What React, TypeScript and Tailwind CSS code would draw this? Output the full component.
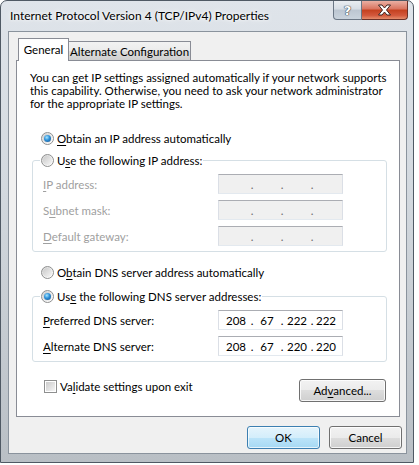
import React from "react";

function Radio({ checked }: { checked?: boolean }) {
  return (
    <span className="relative inline-flex h-[13px] w-[13px] shrink-0 items-center justify-center rounded-full border border-[#8e8f8f] bg-[linear-gradient(135deg,#d4d4d4_0%,#f4f4f4_60%,#ffffff_100%)]">
      <span className="h-[9px] w-[9px] rounded-full bg-[linear-gradient(135deg,#c9c9c9,#f6f6f6)] flex items-center justify-center">
        {checked && (
          <span className="h-[7px] w-[7px] rounded-full bg-[radial-gradient(circle_at_40%_35%,#a6e6ff_0%,#2c8fd8_45%,#1a4f85_100%)]" />
        )}
      </span>
    </span>
  );
}

function U({ children }: { children: React.ReactNode }) {
  return <span className="underline decoration-1 underline-offset-[2px]">{children}</span>;
}

function IpBox({ values, disabled }: { values: string[]; disabled?: boolean }) {
  return (
    <div
      className={`flex h-[20px] w-[125px] items-center border border-t-[#abadb3] border-x-[#dbdfe6] border-b-[#e3e9ef] pl-[3px] ${
        disabled ? "bg-[#f0f0f0] text-[#6d6d6d]" : "bg-white text-black"
      }`}
    >
      <span className="w-[28px] text-center">{values[0]}</span>
      <span className="w-[4px] text-center">.</span>
      <span className="w-[26px] text-center">{values[1]}</span>
      <span className="w-[4px] text-center">.</span>
      <span className="w-[26px] text-center">{values[2]}</span>
      <span className="w-[4px] text-center">.</span>
      <span className="w-[24px] text-center">{values[3]}</span>
    </div>
  );
}

function Row({ label, disabled, values }: { label: React.ReactNode; disabled?: boolean; values: string[] }) {
  return (
    <div className="flex items-center">
      <span className={`w-[175px] ${disabled ? "text-[#a0a0a0]" : "text-black"}`}>{label}</span>
      <IpBox values={values} disabled={disabled} />
    </div>
  );
}

function Button({ children, primary, className = "" }: { children: React.ReactNode; primary?: boolean; className?: string }) {
  return (
    <div
      className={`flex h-[23px] items-center justify-center rounded-[3px] border ${
        primary
          ? "border-[#3c7fb1] bg-[linear-gradient(to_bottom,#e5f4fc_0%,#d4eefb_50%,#bce4f9_50%,#a6d9f4_100%)] shadow-[inset_0_0_0_1px_rgba(255,255,255,0.7)]"
          : "border-[#707070] bg-[linear-gradient(to_bottom,#f2f2f2_0%,#ebebeb_50%,#dddddd_50%,#cfcfcf_100%)] shadow-[inset_0_0_0_1px_rgba(255,255,255,0.8)]"
      } ${className}`}
    >
      {children}
    </div>
  );
}

export default function App() {
  const empty = ["", "", "", ""];
  return (
    <div className="h-[465px] w-[419px] bg-white font-['Lato',sans-serif] text-[11.5px] leading-[13px] text-black">
      <div className="flex h-[463px] w-[414px] flex-col rounded-t-[7px] border border-[#4f5964] bg-[linear-gradient(to_bottom,#dfe4ea_0%,#d3d9df_40%,#b9bfc5_100%)] pb-[8px] pl-[7px] pr-[6px]">
        {/* Title bar */}
        <div className="flex h-[30px] items-start">
          <span className="whitespace-nowrap pl-[2px] pt-[8px] text-[12px] text-black [text-shadow:0_0_6px_#ffffff,0_0_3px_#ffffff]">
            Internet Protocol Version 4 (TCP/IPv4) Properties
          </span>
          <div className="ml-auto mr-[-1px] flex h-[19px]">
            <div className="flex w-[29px] items-center justify-center rounded-bl-[4px] border border-t-0 border-[#6b7785] bg-[linear-gradient(to_bottom,#e9edf1_0%,#d6dde5_45%,#bcc6d1_50%,#c9d3dd_100%)]">
              <span className="font-['DejaVu_Sans',sans-serif] text-[13px] font-bold text-white [text-shadow:0_0_1px_#3b4550,0_0_1px_#3b4550,0_0_1px_#3b4550]">
                ?
              </span>
            </div>
            <div className="flex w-[46px] items-center justify-center rounded-br-[4px] border border-l-0 border-t-0 border-[#6b3128] bg-[linear-gradient(to_bottom,#eab0a3_0%,#d9735e_45%,#c4401f_50%,#d3583c_80%,#e58d6c_100%)]">
              <svg width="15" height="12" viewBox="0 0 15 12">
                <path
                  d="M1.5 1 H5 L7.5 4 L10 1 H13.5 L9.5 6 L13.5 11 H10 L7.5 8 L5 11 H1.5 L5.5 6 Z"
                  fill="#ffffff"
                  stroke="#3d2320"
                  strokeWidth="1"
                  strokeLinejoin="round"
                />
              </svg>
            </div>
          </div>
        </div>

        {/* Client area */}
        <div className="flex flex-1 flex-col border border-[#8a939d] bg-[#f0f0f0] pl-[7px] pr-[6px] pt-[6px]">
          {/* Tabs */}
          <div className="flex h-[22px] items-end whitespace-nowrap">
            <div className="relative z-10 -mb-px ml-[2px] flex h-[23px] w-[51px] items-center justify-center border border-b-0 border-[#898c95] bg-white pb-[1px]">
              General
            </div>
            <div className="flex h-[19px] w-[122px] items-center justify-center border border-b-0 border-l-0 border-[#898c95] bg-[linear-gradient(to_bottom,#f2f2f2_0%,#ebebeb_50%,#dddddd_50%,#cfcfcf_100%)] pt-[1px]">
              Alternate Configuration
            </div>
          </div>

          {/* Panel */}
          <div className="flex h-[357px] flex-col whitespace-nowrap border border-[#898c95] bg-white pl-[13px] pr-[12px] pt-[10px]">
            <p className="leading-[13px]">
              You can get IP settings assigned automatically if your network supports
              <br />
              this capability. Otherwise, you need to ask your network administrator
              <br />
              for the appropriate IP settings.
            </p>

            <div className="mt-[20px] flex h-[17px] items-center gap-[3px] pl-[11px]">
              <Radio checked />
              <span>
                <U>O</U>btain an IP address automatically
              </span>
            </div>

            <fieldset className="mt-[5px] ml-[2px] rounded-[3px] border border-[#d5dfe5] pb-[5px]">
              <legend className="ml-[7px] flex h-[17px] items-center gap-[3px] px-[1px]">
                <Radio />
                <span>
                  U<U>s</U>e the following IP address:
                </span>
              </legend>
              <div className="flex flex-col gap-[6px] pl-[10px] pt-[5px]">
                <Row disabled values={empty} label={<><U>I</U>P address:</>} />
                <Row disabled values={empty} label={<>S<U>u</U>bnet mask:</>} />
                <Row disabled values={empty} label={<><U>D</U>efault gateway:</>} />
              </div>
            </fieldset>

            <div className="mt-[12px] flex h-[17px] items-center gap-[3px] pl-[11px]">
              <Radio />
              <span>
                O<U>b</U>tain DNS server address automatically
              </span>
            </div>

            <fieldset className="mt-[7px] ml-[2px] rounded-[3px] border border-[#d5dfe5] pb-[5px]">
              <legend className="ml-[7px] flex h-[17px] items-center gap-[3px] px-[1px]">
                <Radio checked />
                <span>
                  Us<U>e</U> the following DNS server addresses:
                </span>
              </legend>
              <div className="flex flex-col gap-[6px] pl-[10px] pt-[5px]">
                <Row values={["208", "67", "222", "222"]} label={<><U>P</U>referred DNS server:</>} />
                <Row values={["208", "67", "220", "220"]} label={<><U>A</U>lternate DNS server:</>} />
              </div>
            </fieldset>

            <div className="mt-[16px] flex items-start justify-between">
              <div className="ml-[14px] flex h-[17px] items-center gap-[3px]">
                <span className="flex h-[13px] w-[13px] items-center justify-center border border-[#8e8f8f] bg-white">
                  <span className="h-[9px] w-[9px] bg-[linear-gradient(135deg,#cbcbcb,#f5f5f5)]" />
                </span>
                <span>
                  Va<U>l</U>idate settings upon exit
                </span>
              </div>
              <Button className="mr-[1px] mt-[1px] w-[87px]">
                <span>
                  Ad<U>v</U>anced...
                </span>
              </Button>
            </div>
          </div>

          {/* Bottom buttons */}
          <div className="mr-[-2px] mt-[9px] flex justify-end gap-[9px]">
            <Button primary className="w-[73px]">
              OK
            </Button>
            <Button className="w-[73px]">Cancel</Button>
          </div>
        </div>
      </div>
    </div>
  );
}
